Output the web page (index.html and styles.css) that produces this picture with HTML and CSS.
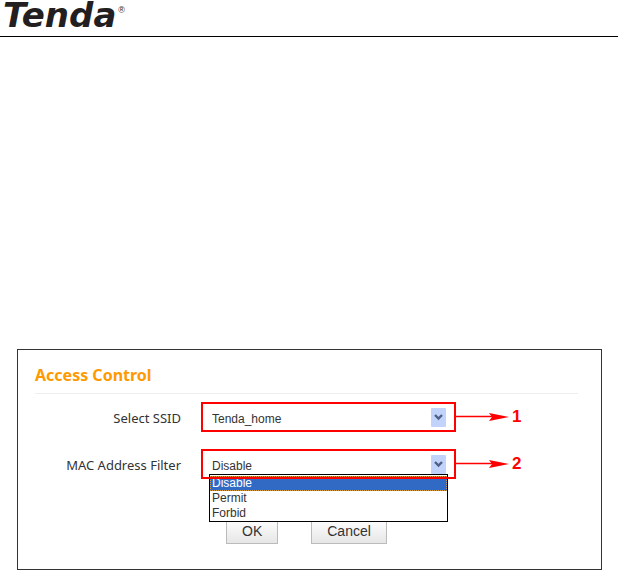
FILE: index.html
```html
<!DOCTYPE html>
<html lang="en">
<head>
    <meta charset="UTF-8">
    <meta name="viewport" content="width=device-width, initial-scale=1.0">
    <title>Access Control</title>
    <link rel="stylesheet" href="styles.css">
</head>
<body>
    <header class="page-header">
        <div class="logo">Tenda<span class="mark">®</span></div>
    </header>

    <main class="page">
        <form class="panel">
            <h1>Access Control</h1>

            <div class="row">
                <label for="ssid">Select SSID</label>
                <div class="field">
                    <select id="ssid">
                        <option>Tenda_home</option>
                    </select>
                    <svg class="drop" viewBox="0 0 15 19" aria-hidden="true">
                        <rect width="15" height="19" rx="1" fill="#c1d2fb"/>
                        <path d="M4 7l3.500 3.500L11 7" fill="none" stroke="#4d6185" stroke-width="2.400"/>
                    </svg>
                </div>
                <svg class="arrow" viewBox="0 0 53 10" aria-hidden="true">
                    <path d="M0 4.500H36" stroke="#f00" stroke-width="1.500"/>
                    <path d="M33 1L53 5L33 9L36 5Z" fill="#f00"/>
                </svg>
                <span class="step">1</span>
            </div>

            <div class="row">
                <label for="filter">MAC Address Filter</label>
                <div class="field">
                    <select id="filter">
                        <option>Disable</option>
                        <option>Permit</option>
                        <option>Forbid</option>
                    </select>
                    <svg class="drop" viewBox="0 0 15 19" aria-hidden="true">
                        <rect width="15" height="19" rx="1" fill="#c1d2fb"/>
                        <path d="M4 7l3.500 3.500L11 7" fill="none" stroke="#4d6185" stroke-width="2.400"/>
                    </svg>
                    <ul class="menu" role="listbox" aria-label="MAC Address Filter">
                        <li class="selected" role="option" aria-selected="true">Disable</li>
                        <li role="option">Permit</li>
                        <li role="option">Forbid</li>
                    </ul>
                </div>
                <svg class="arrow" viewBox="0 0 53 10" aria-hidden="true">
                    <path d="M0 4.500H36" stroke="#f00" stroke-width="1.500"/>
                    <path d="M33 1L53 5L33 9L36 5Z" fill="#f00"/>
                </svg>
                <span class="step">2</span>
            </div>

            <div class="buttons">
                <button type="button">OK</button>
                <button type="button">Cancel</button>
            </div>
        </form>
    </main>
</body>
</html>
```

FILE: styles.css
```css
* {
    box-sizing: border-box;
}
body {
    margin: 0;
    background-color: #fff;
    color: #333;
    font-family: "Liberation Sans", Arial, sans-serif;
}
.page-header {
    height: 37px;
    padding-left: 3px;
    border-bottom: 1px solid #000;
}
.logo {
    display: flex;
    align-items: flex-start;
    font: italic bold 34px/30px "DejaVu Sans", sans-serif;
    color: #231f20;
}
.mark {
    margin-left: 2px;
    font: 9px/20px "Liberation Sans", Arial, sans-serif;
}
.page {
    padding: 312px 16px 0 17px;
}
.panel {
    padding: 15px 23px 25px 17px;
    border: 1px solid #333;
}
h1 {
    margin: 0 0 8px;
    padding-bottom: 8px;
    border-bottom: 1px solid #eee;
    font: bold 16px/20px "Noto Sans", sans-serif;
    color: #ff9900;
}
.row {
    display: flex;
    align-items: center;
    margin-bottom: 17px;
}
.row label {
    width: 146px;
    margin-right: 20px;
    font: 13px/20px "Noto Sans", sans-serif;
    text-align: right;
    padding-top: 2px;
}
.field {
    position: relative;
    display: flex;
    align-items: center;
    width: 255px;
    height: 30px;
    padding: 2px 10px 2px 7px;
}
/* red outline stays above the open list */
.field::after {
    content: "";
    position: absolute;
    inset: 0;
    z-index: 2;
    border: 2px solid #f00;
    pointer-events: none;
}
.field select {
    flex: 1;
    height: 24px;
    margin: 0;
    padding: 4px 0 0 4px;
    border: 0;
    background: none;
    appearance: none;
    color: #333;
    font: 12px/20px "Liberation Sans", Arial, sans-serif;
}
.drop {
    width: 15px;
    height: 19px;
    pointer-events: none;
}
.menu {
    position: absolute;
    top: 25px;
    left: 8px;
    right: 8px;
    z-index: 1;
    margin: 0;
    padding: 1px 0 0;
    border: 1px solid #000;
    background-color: #fff;
    font-size: 12px;
    line-height: 15px;
    list-style: none;
}
.menu li {
    padding: 0 2px;
}
.menu .selected {
    background-color: #316ac5;
    color: #fff;
    outline: 1px dotted #d69a3a;
    outline-offset: -1px;
}
.arrow {
    width: 53px;
    height: 10px;
}
.step {
    margin-left: 3px;
    color: #f00;
    font-size: 17px;
    font-weight: bold;
    line-height: 20px;
}
.buttons {
    display: flex;
    gap: 33px;
    margin: 39px 0 0 191px;
}
.buttons button {
    height: 26px;
    padding: 0 15px;
    border: 1px solid #bbb;
    background: linear-gradient(#fff, #e6e6e6);
    color: #333;
    font: 14px/20px "Liberation Sans", Arial, sans-serif;
}
```
